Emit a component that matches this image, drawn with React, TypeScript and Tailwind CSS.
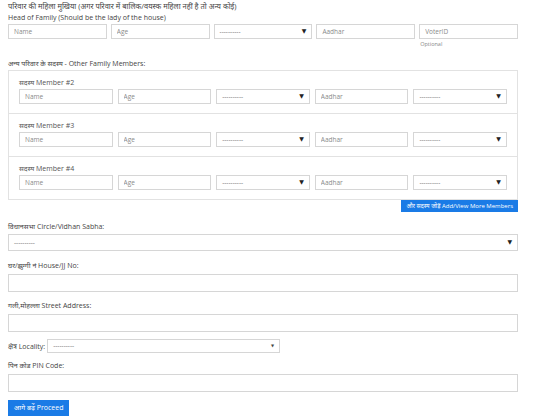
const font = { fontFamily: '"Open Sans", "Noto Sans", "DejaVu Sans", sans-serif' };

const inputCls =
  "block h-[15px] w-full border border-[#d6d6d6] bg-white px-[5px] text-[6.5px] leading-[13px] text-[#777] outline-none placeholder:text-[#8a8a8a]";

function Field({ placeholder }: { placeholder: string }) {
  return <input className={inputCls} placeholder={placeholder} readOnly />;
}

function Select({ className = "" }: { className?: string }) {
  return (
    <div
      className={`flex h-[15px] w-full items-center justify-between border border-[#d6d6d6] bg-white px-[5px] text-[6.5px] text-[#777] ${className}`}
    >
      <span>----------</span>
      <span className="text-[6px] text-[#222]">▼</span>
    </div>
  );
}

function MemberRow() {
  return (
    <div className="grid grid-cols-5 gap-[5px]">
      <Field placeholder="Name" />
      <Field placeholder="Age" />
      <Select />
      <Field placeholder="Aadhar" />
      <Select />
    </div>
  );
}

const members = [2, 3, 4];

export default function App() {
  return (
    <div className="h-[420px] w-[548px] overflow-hidden bg-white text-[#444]" style={font}>
      <div className="w-[518px] pl-[8px] pt-[1px]">
        <p className="text-[7.5px] leading-[11px] text-[#444]">
          परिवार की महिला मुखिया (अगर परिवार में बालिक/वयस्क महिला नहीं है तो अन्य कोई)
        </p>
        <p className="text-[7px] leading-[11px] text-[#444]">Head of Family (Should be the lady of the house)</p>
        <div className="mt-[1px] grid grid-cols-5 items-start gap-[4px]">
          <Field placeholder="Name" />
          <Field placeholder="Age" />
          <Select />
          <Field placeholder="Aadhar" />
          <div>
            <Field placeholder="VoterID" />
            <p className="mt-[1px] pl-[1px] text-[5.5px] leading-[8px] text-[#888]">Optional</p>
          </div>
        </div>

        <p className="mt-[10px] text-[7px] leading-[11px] text-[#444]">अन्य परिवार के सदस्य - Other Family Members:</p>
        <div className="mt-[1px] border border-[#e2e2e2]">
          {members.map((n, i) => (
            <div
              key={n}
              className={`px-[10px] pb-[9px] pt-[6px] ${i > 0 ? "border-t border-[#e2e2e2]" : ""}`}
            >
              <p className="mb-[1px] text-[7px] leading-[11px] text-[#555]">सदस्य Member #{n}</p>
              <MemberRow />
            </div>
          ))}
        </div>
        <div className="flex justify-end">
          <button className="h-[12px] bg-[#1a7be6] px-[5px] text-[6px] leading-[12px] text-white">
            और सदस्य जोड़ें Add/View More Members
          </button>
        </div>

        <p className="mt-[9px] text-[7px] leading-[11px] text-[#444]">विधानसभा Circle/Vidhan Sabha:</p>
        <Select className="mt-[2px] h-[17px]" />

        <p className="mt-[9px] text-[7px] leading-[11px] text-[#444]">घर/झुग्गी नं House/JJ No:</p>
        <div className="mt-[3px] h-[18px] border border-[#d6d6d6]" />

        <p className="mt-[8px] text-[7px] leading-[11px] text-[#444]">गली,मोहल्ला Street Address:</p>
        <div className="mt-[3px] h-[18px] border border-[#d6d6d6]" />

        <div className="mt-[7px] flex items-center gap-[2px]">
          <span className="text-[7px] leading-[11px] text-[#444]">क्षेत्र Locality:</span>
          <div className="flex h-[14px] w-[233px] items-center justify-between border border-[#d6d6d6] px-[5px] text-[6.5px] text-[#777]">
            <span>----------</span>
            <span className="text-[4px] text-[#444]">▼</span>
          </div>
        </div>

        <p className="mt-[7px] text-[7px] leading-[11px] text-[#444]">पिन कोड PIN Code:</p>
        <div className="mt-[3px] h-[18px] border border-[#d6d6d6]" />

        <button className="mt-[8px] h-[16px] bg-[#1a7be6] px-[6px] text-[7px] leading-[16px] text-white">
          आगे बढ़ें Proceed
        </button>
      </div>
    </div>
  );
}
